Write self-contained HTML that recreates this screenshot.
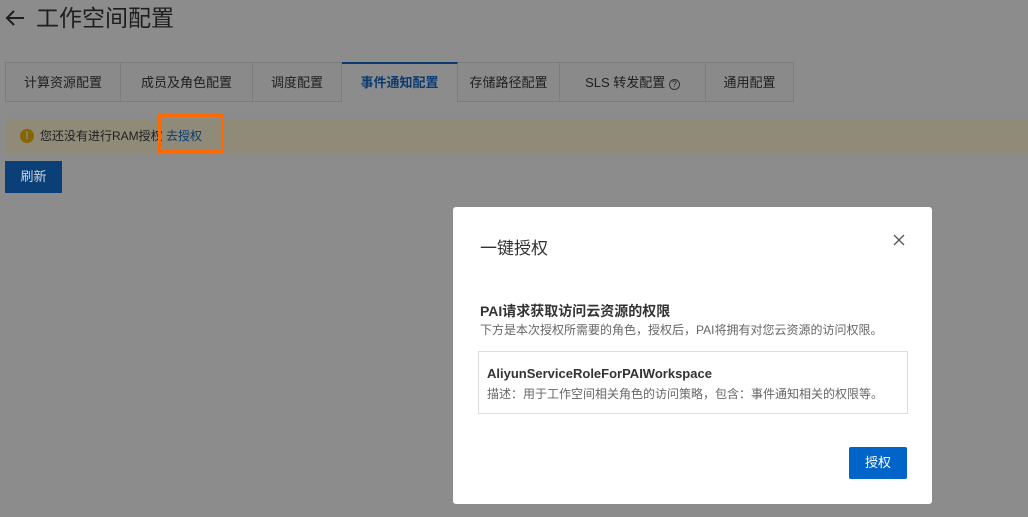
<!DOCTYPE html>
<html><head><meta charset="utf-8"><style>
*{margin:0;padding:0;box-sizing:border-box}
body{width:1028px;height:517px;overflow:hidden;background:#8c8c8c;font-family:"Liberation Sans","Noto Sans CJK SC",sans-serif;position:relative;color:#1e1e1e}
.abs{position:absolute}
.title{left:36px;top:3px;font-size:23px;color:#1e1e1e;line-height:30px}
.tabs{left:5px;top:62px;height:40px;display:flex}
.tab{border:1px solid #7c7c7c;border-left:none;height:40px;line-height:40px;font-size:13px;color:#1e1e1e;text-align:center;background:#8a8a8a}
.tab:first-child{border-left:1px solid #7c7c7c}
.tab.act{background:#8c8c8c;border-top:2px solid #0a3a70;border-bottom:none;color:#0a3a70;font-weight:bold;line-height:38px}
.alert{left:5px;top:119px;width:1023px;height:34px;background:#8f8b78;font-size:12px;line-height:34px;padding-left:35px;color:#1e1e1e}
.ic{position:absolute;left:15px;top:10px;width:14px;height:14px;border-radius:50%;background:#876500;color:#8f8b78;font-size:11px;line-height:14px;text-align:center;font-weight:bold}
.btn{color:#fff;font-size:13px;text-align:center}
.modal{left:453px;top:207px;width:479px;height:297px;background:#fff;border-radius:3px}
</style></head><body>
<svg class="abs" style="left:4px;top:9px" width="22" height="18" viewBox="0 0 22 18"><path d="M20 9H3M10 2L3 9l7 7" stroke="#1e1e1e" stroke-width="2" fill="none"/></svg>
<div class="abs title">工作空间配置</div>
<div class="abs tabs">
<div class="tab" style="width:116px">计算资源配置</div>
<div class="tab" style="width:132px">成员及角色配置</div>
<div class="tab" style="width:89px">调度配置</div>
<div class="tab act" style="width:116px">事件通知配置</div>
<div class="tab" style="width:102px">存储路径配置</div>
<div class="tab" style="width:146px">SLS 转发配置 <span style="font-size:9px;border:1px solid #333;border-radius:50%;display:inline-block;width:11px;height:11px;line-height:9px">?</span></div>
<div class="tab" style="width:88px">通用配置</div>
</div>
<div class="abs alert"><span class="ic">!</span>您还没有进行RAM授权 <span style="color:#0a3a70">去授权</span></div>
<div class="abs btn" style="left:5px;top:161px;width:57px;height:32px;line-height:32px;background:#0b3f78;color:#cfd6e0">刷新</div>
<div class="abs" style="left:158px;top:114px;width:66px;height:39px;border:3px solid #ff6a00"></div>
<div class="abs modal">
<div class="abs" style="left:27px;top:27px;font-size:17px;color:#333">一键授权</div>
<svg class="abs" style="left:440px;top:27px" width="12" height="12" viewBox="0 0 12 12"><path d="M1 1L11 11M11 1L1 11" stroke="#555" stroke-width="1.3"/></svg>
<div class="abs" style="left:27px;top:94px;font-size:14px;font-weight:bold;color:#333">PAI请求获取访问云资源的权限</div>
<div class="abs" style="left:27px;top:114px;font-size:12px;color:#666">下方是本次授权所需要的角色，授权后，PAI将拥有对您云资源的访问权限。</div>
<div class="abs" style="left:25px;top:144px;width:430px;height:63px;border:1px solid #ddd">
<div class="abs" style="left:8px;top:14px;font-size:13px;font-weight:bold;color:#333">AliyunServiceRoleForPAIWorkspace</div>
<div class="abs" style="left:8px;top:33px;font-size:12px;color:#666;white-space:nowrap">描述：用于工作空间相关角色的访问策略，包含：事件通知相关的权限等。</div>
</div>
<div class="abs btn" style="left:396px;top:240px;width:58px;height:32px;line-height:32px;border-radius:2px;background:#0064c8">授权</div>
</div>
</body></html>
